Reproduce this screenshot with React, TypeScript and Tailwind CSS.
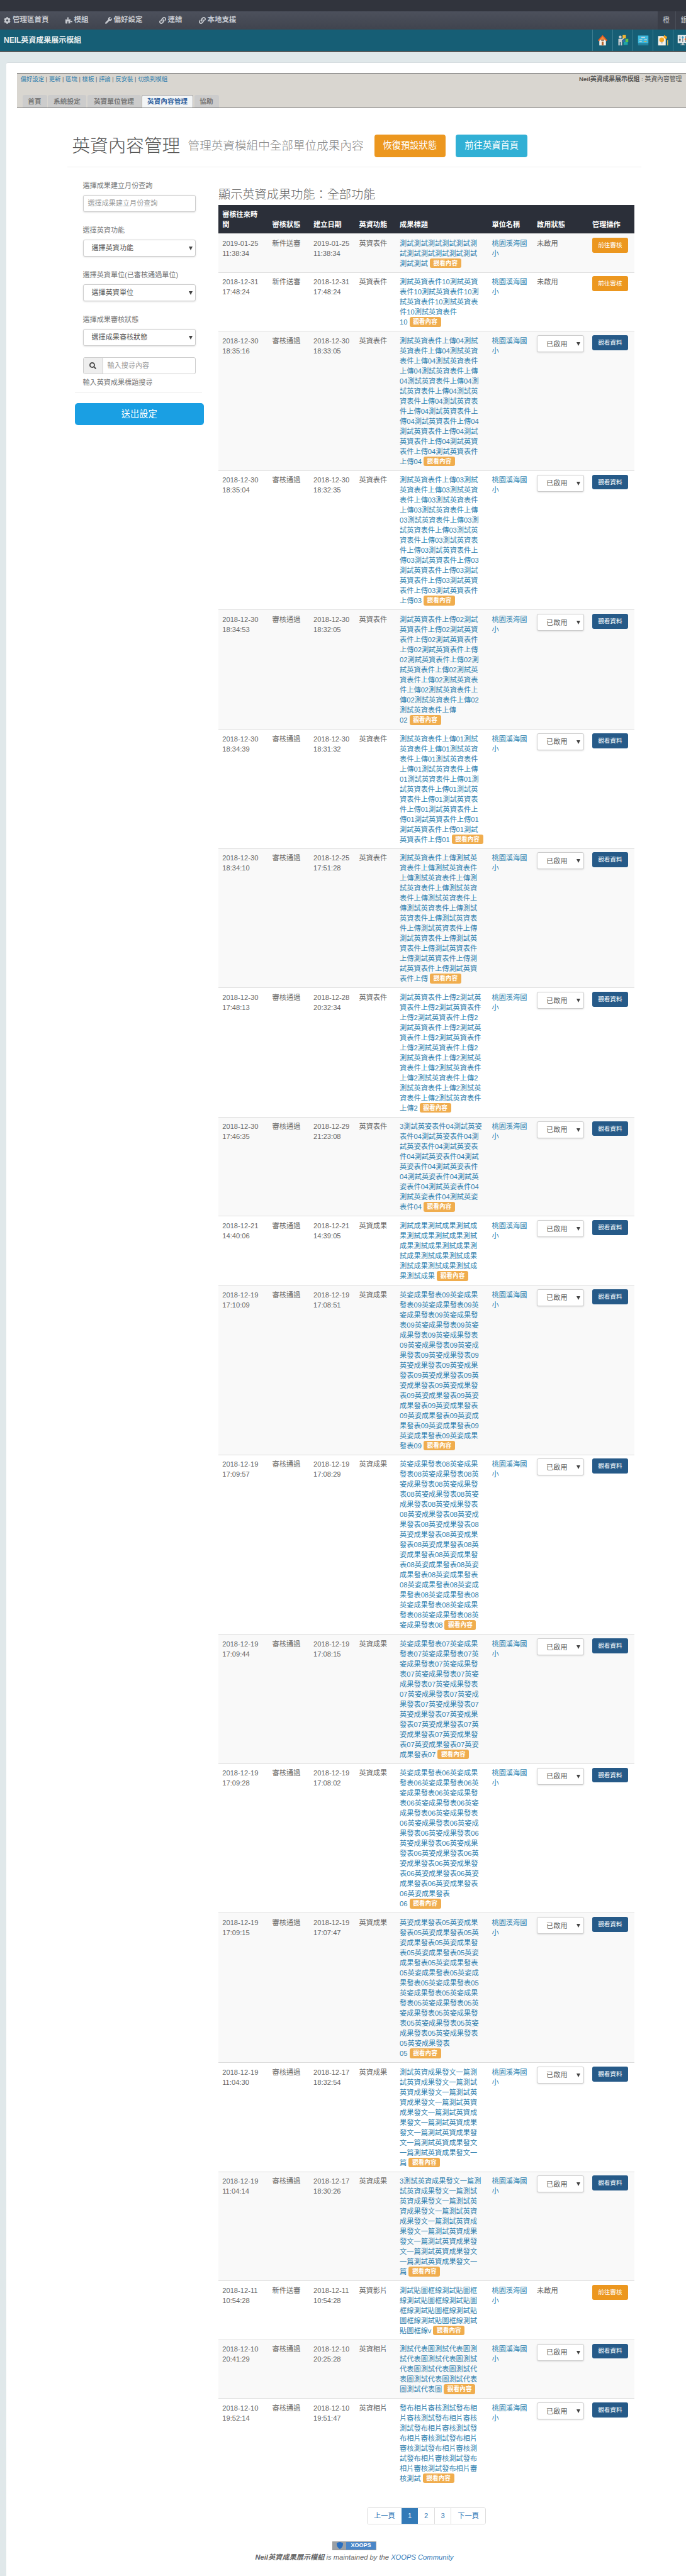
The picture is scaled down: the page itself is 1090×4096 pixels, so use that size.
import React from 'react';
import { FaCog, FaPuzzlePiece, FaWrench, FaLink, FaSearch } from 'react-icons/fa';

const FONT = '"Liberation Sans","Noto Sans CJK TC",sans-serif';

interface Row {
  sent: [string, string];
  status: string;
  created: [string, string];
  kind: string;
  title: string;
  active: boolean;
}

const mk = (
  sent: string,
  status: string,
  created: string,
  kind: string,
  title: string,
  active = true
): Row => ({
  sent: sent.split(' ') as [string, string],
  status,
  created: created.split(' ') as [string, string],
  kind,
  title,
  active,
});

const PASS = '審核通過';
const NEW = '新件送審';
const FORM = '英資表件';
const RESULT = '英資成果';

const rows: Row[] = [
  mk('2019-01-25 11:38:34', NEW, '2019-01-25 11:38:34', FORM, '測試'.repeat(13), false),
  mk('2018-12-31 17:48:24', NEW, '2018-12-31 17:48:24', FORM, '測試英資表件10'.repeat(6), false),
  mk('2018-12-30 18:35:16', PASS, '2018-12-30 18:33:05', FORM, '測試英資表件上傳04'.repeat(15)),
  mk('2018-12-30 18:35:04', PASS, '2018-12-30 18:32:35', FORM, '測試英資表件上傳03'.repeat(15)),
  mk('2018-12-30 18:34:53', PASS, '2018-12-30 18:32:05', FORM, '測試英資表件上傳02'.repeat(12)),
  mk('2018-12-30 18:34:39', PASS, '2018-12-30 18:31:32', FORM, '測試英資表件上傳01'.repeat(13)),
  mk('2018-12-30 18:34:10', PASS, '2018-12-25 17:51:28', FORM, '測試英資表件上傳'.repeat(17)),
  mk('2018-12-30 17:48:13', PASS, '2018-12-28 20:32:34', FORM, '測試英資表件上傳2'.repeat(15)),
  mk('2018-12-30 17:46:35', PASS, '2018-12-29 21:23:08', FORM, '3' + '測試英姿表件04'.repeat(13)),
  mk('2018-12-21 14:40:06', PASS, '2018-12-21 14:39:05', RESULT, '測試成果'.repeat(15)),
  mk('2018-12-19 17:10:09', PASS, '2018-12-19 17:08:51', RESULT, '英姿成果發表09'.repeat(24)),
  mk('2018-12-19 17:09:57', PASS, '2018-12-19 17:08:29', RESULT, '英姿成果發表08'.repeat(26)),
  mk('2018-12-19 17:09:44', PASS, '2018-12-19 17:08:15', RESULT, '英姿成果發表07'.repeat(18)),
  mk('2018-12-19 17:09:28', PASS, '2018-12-19 17:08:02', RESULT, '英姿成果發表06'.repeat(20)),
  mk('2018-12-19 17:09:15', PASS, '2018-12-19 17:07:47', RESULT, '英姿成果發表05'.repeat(20)),
  mk('2018-12-19 11:04:30', PASS, '2018-12-17 18:32:54', RESULT, '測試英資成果發文一篇'.repeat(10)),
  mk('2018-12-19 11:04:14', PASS, '2018-12-17 18:30:26', RESULT, '3' + '測試英資成果發文一篇'.repeat(10)),
  mk('2018-12-11 10:54:28', NEW, '2018-12-11 10:54:28', '英資影片', '測試貼圖框線'.repeat(8) + 'v', false),
  mk('2018-12-10 20:41:29', PASS, '2018-12-10 20:25:28', '英資相片', '測試代表圖'.repeat(10)),
  mk('2018-12-10 19:52:14', PASS, '2018-12-10 19:51:47', '英資相片', '發布相片審核測試'.repeat(10)),
];

// break the titles the way the reference does: width in CJK-char units,
// the last token stays on one line with the badge
const LINE_UNITS = 11.7;
const BADGE_UNITS = 4.5;

const tokenWidth = (t: string) => (/^[0-9a-z]+$/.test(t) ? t.length * 0.556 : 1);

const wrapTitle = (title: string): string[] => {
  const tokens = title.match(/[0-9a-z]+|./g) ?? [];
  const lines: string[] = [];
  let line = '';
  let used = 0;
  tokens.forEach((t, i) => {
    const w = tokenWidth(t);
    const extra = i === tokens.length - 1 ? BADGE_UNITS : 0;
    if (used + w + extra > LINE_UNITS) {
      lines.push(line);
      line = '';
      used = 0;
    }
    line += t;
    used += w;
  });
  lines.push(line);
  return lines;
};

const headers = [
  { label: '審核往來時間', width: 'w-[79.4px]' },
  { label: '審核狀態', width: 'w-[65.4px]' },
  { label: '建立日期', width: 'w-[72.4px]' },
  { label: '英資功能', width: 'w-[64.6px]' },
  { label: '成果標題', width: 'w-[146.3px]' },
  { label: '單位名稱', width: 'w-[71.6px]' },
  { label: '啟用狀態', width: 'w-[87.9px]' },
  { label: '管理操作', width: 'w-[73.1px]' },
];

const Arrow = () => (
  <svg width="6" height="7" viewBox="0 0 6 7" className="shrink-0">
    <path d="M0 1h6L3 7z" fill="#444" />
  </svg>
);

const HomeIcon = () => (
  <svg width="17" height="18" viewBox="0 0 22 24">
    <path d="M4 11h14v12H4z" fill="#f4f1ea" />
    <path d="M9 15h4v8H9z" fill="#b5622a" />
    <path d="M11 1L1 12l2 2 8-8 8 8 2-2z" fill="#e8591c" />
    <path d="M11 4l-6 7h12z" fill="#f08a3c" />
    <path d="M8 11h6v2H8z" fill="#7a5a48" />
  </svg>
);

const PuzzleIcon = () => (
  <svg width="18" height="18" viewBox="0 0 24 24">
    <circle cx="6" cy="5" r="3" fill="#c9cdd0" />
    <path d="M2 9h8l4-3 1 2-5 4v11H7v-7H5v7H2z" fill="#c9cdd0" />
    <path d="M11 1h7v7h-7z" fill="#f2b632" />
    <path d="M12 10h5v6h-5z" fill="#2a6fb0" />
    <path d="M17 9h6v7h-6z" fill="#5cc24a" />
    <path d="M13 16h9v6h-9z" fill="#1fa3a8" />
  </svg>
);

const BoardIcon = () => (
  <svg width="18" height="18" viewBox="0 0 24 24">
    <path d="M1 2h22v17H1z" fill="#3db8dc" />
    <path d="M8 5h8v2H8zM4 10h6v2H4zM14 10h6v2h-6zM4 14h5v2H4z" fill="#c7d6dd" />
    <path d="M14 14h5v2h-5z" fill="#e7b04a" />
    <path d="M1 21h22v1.500H1z" fill="#3db8dc" />
  </svg>
);

const BulbIcon = () => (
  <svg width="18" height="18" viewBox="0 0 24 24">
    <path d="M1 3h12l4 4v16H1z" fill="#f3f1ea" />
    <circle cx="8.500" cy="11" r="5" fill="#f5a623" />
    <path d="M6.500 16h4v3h-4z" fill="#b9c0c4" />
    <path d="M14 1l5 3 1 3-3 3-5-5z" fill="#f2a31d" />
    <path d="M20 12h2v11h-2z" fill="#d9b24a" />
  </svg>
);

const SliderIcon = () => (
  <svg width="18" height="18" viewBox="0 0 24 24">
    <path d="M1 1h22v17H1z" fill="#e9ecec" />
    <path d="M5 3h1.500v13H5zM11 3h1.500v13H11zM17 3h1.500v13H17z" fill="#6d7a80" />
    <circle cx="5.700" cy="11" r="2" fill="#545e63" />
    <circle cx="11.700" cy="6" r="2" fill="#2f9fd0" />
    <circle cx="17.700" cy="10" r="2" fill="#e8662c" />
    <path d="M10 18h4v3h3v1.500H7V21h3z" fill="#c7cccc" />
  </svg>
);

const NavItem = ({ icon, label }: { icon: React.ReactNode; label: string }) => (
  <div className="flex items-center gap-[3px] text-[11.5px] font-bold text-[#c9ccd2]">
    <span className="text-[11px] text-[#c9ccd2]">{icon}</span>
    {label}
  </div>
);

const Field: React.FC<{ label: string; children: React.ReactNode }> = ({ label, children }) => (
  <div className="mb-[21px]">
    <div className="mb-[7px] text-[11.100px] leading-[16px] text-[#777]">{label}</div>
    {children}
  </div>
);

const SelectBox = ({ text }: { text: string }) => (
  <div className="flex h-[27px] w-[179.500px] items-center justify-between rounded-[3px] border border-[#ccc] bg-white pl-[13px] pr-[4px] text-[11.100px] text-[#555] shadow-sm">
    {text}
    <Arrow />
  </div>
);

const StateSelect = () => (
  <div className="flex h-[27px] w-[74.700px] items-center justify-between rounded-[3px] border border-[#ccc] bg-white pl-[14px] pr-[5px] text-[#666] shadow-sm">
    已啟用
    <Arrow />
  </div>
);

const TableRow = ({ row, odd }: { row: Row; odd: boolean }) => {
  const cell = 'border-t border-[#ddd] pb-[6px] pl-[6.200px] pr-[6.200px] pt-[6.600px] align-top';
  const lines = wrapTitle(row.title);
  return (
    <tr className={odd ? 'bg-[#f9f9f9]' : 'bg-white'}>
      <td className={cell}>
        {row.sent[0]}
        <br />
        {row.sent[1]}
      </td>
      <td className={cell}>{row.status}</td>
      <td className={cell}>
        {row.created[0]}
        <br />
        {row.created[1]}
      </td>
      <td className={cell}>{row.kind}</td>
      <td className="overflow-hidden border-t border-[#ddd] pb-[6px] pl-[6.200px] pr-[6.200px] pt-[6.600px] align-top text-[#2f7fae]">
        {lines.map((line, i) => (
          <div key={i} className="h-[16px] whitespace-nowrap">
            {line}
            {i === lines.length - 1 && (
              <span className="ml-[3px] inline-block h-[15.500px] w-[50px] rounded-[3px] bg-[#f0ad4e] text-center align-top text-[9.700px] font-bold leading-[15.500px] text-white">
                觀看內容
              </span>
            )}
          </div>
        ))}
      </td>
      <td className={`${cell} text-[#2f7fae]`}>桃園溪海國小</td>
      <td className={`${cell} !pt-[5.800px]`}>{row.active ? <StateSelect /> : <span className="inline-block pt-[0.800px]">未啟用</span>}</td>
      <td className={`${cell} !pl-[6.200px] !pr-0 !pt-[5.800px]`}>
        {row.active ? (
          <div className="flex h-[23.800px] w-[56.600px] items-center justify-center rounded-[3px] bg-[#265a88] text-[9.600px] text-white">
            觀看資料
          </div>
        ) : (
          <div className="flex h-[23.800px] w-[56.600px] items-center justify-center rounded-[3px] bg-[#ec971f] text-[9.600px] text-white">
            前往審核
          </div>
        )}
      </td>
    </tr>
  );
};

export default function App() {
  return (
    <div
      className="h-[4096px] w-[1090px] overflow-hidden bg-[#e0e8ea]"
      style={{ fontFamily: FONT }}
    >
      <div className="h-[17.600px] bg-[#31343d]" />
      <div className="flex h-[29px] items-center bg-gradient-to-b from-[#4c505c] to-[#40444e] pl-[6px]">
        <div className="flex items-center gap-[26px]">
          <NavItem icon={<FaCog />} label="管理區首頁" />
          <NavItem icon={<FaPuzzlePiece />} label="模組" />
          <NavItem icon={<FaWrench />} label="偏好設定" />
          <NavItem icon={<FaLink />} label="連結" />
          <NavItem icon={<FaLink />} label="本地支援" />
        </div>
        <div className="ml-auto flex h-full text-[11px] text-[#c9ccd2]">
          <div className="flex w-[29px] items-center justify-center border-r border-[#4a4e58] bg-[#3b3e48]">橙</div>
          <div className="flex w-[16.500px] items-center overflow-hidden bg-[#3b3e48] pl-[8px]">
            <span className="shrink-0">銀</span>
          </div>
        </div>
      </div>
      <div className="flex h-[35px] items-center border-b border-black bg-[#165e75] pl-[6px]">
        <div className="text-[12px] font-bold text-[#e8eef0]">NEIL英資成果展示模組</div>
        <div className="ml-auto flex h-full w-[148.600px] overflow-hidden">
          {[<HomeIcon />, <PuzzleIcon />, <BoardIcon />, <BulbIcon />, <SliderIcon />].map((icon, i) => (
            <div key={i} className="flex h-full w-[31.900px] shrink-0 items-center justify-center border-l border-[#3a7c90]">
              {icon}
            </div>
          ))}
        </div>
      </div>

      <div className="ml-[10px] mt-[17px] h-[3997px] rounded-tl-[3px] border-t border-[#d6dde0] bg-white pt-[16px]">
        {/* module admin bar */}
        <div className="relative ml-[16.500px] flex h-[56px] border-y border-[#777] bg-[#d9d6d0]">
          <div className="flex-1 pl-[6px] pt-[2px] text-[9.400px] leading-[14px] text-[#aaa]">
            {['偏好設定', '更新', '區塊', '樣板', '評論', '反安裝', '切換到模組'].map((t, i) => (
              <span key={t}>
                {i > 0 && <span className="text-[#666]"> | </span>}
                <span className="text-[#2f7fae]">{t}</span>
              </span>
            ))}
          </div>
          <div className="w-[170px] overflow-hidden whitespace-nowrap pt-[2px] text-[9.800px] leading-[14px] text-[#555]">
            <b>Neil英資成果展示模組</b> : 英資內容管理
          </div>
          <div className="absolute bottom-0 left-[9px] flex gap-[1.500px] text-[10.700px] font-bold text-[#777]">
            <div className="flex h-[19.500px] w-[39px] items-center justify-center rounded-t-[3px] bg-[#ccc]">首頁</div>
            <div className="flex h-[19.500px] w-[61px] items-center justify-center rounded-t-[3px] bg-[#ccc]">系統設定</div>
            <div className="flex h-[19.500px] w-[85px] items-center justify-center rounded-t-[3px] bg-[#ccc]">英資單位管理</div>
            <div className="flex h-[19.500px] w-[82px] items-center justify-center rounded-t-[3px] border-x border-t border-[#aaa] bg-[#f3f5f6] text-[#2e5f9e]">
              英資內容管理
            </div>
            <div className="flex h-[19.500px] w-[39px] items-center justify-center rounded-t-[3px] bg-[#ccc]">協助</div>
          </div>
        </div>

        <div className="ml-[97px] w-[912px]">
          {/* page header */}
          <div className="mt-[42px] flex h-[52.500px] items-start border-b border-[#eee] pl-[7.500px]">
            <div className="flex h-[37px] items-center">
              <span className="text-[28.600px] font-light text-[#555]">英資內容管理</span>
              <span className="ml-[12.500px] text-[18.600px] font-light text-[#888]">管理英資模組中全部單位成果內容</span>
              <div className="ml-[17px] flex h-[36.600px] w-[113.600px] items-center justify-center rounded-[4px] bg-[#ec971f] text-[14.300px] text-white">
                恢復預設狀態
              </div>
              <div className="ml-[16.300px] flex h-[36.600px] w-[113.600px] items-center justify-center rounded-[4px] bg-[#31b0d5] text-[14.300px] text-white">
                前往英資首頁
              </div>
            </div>
          </div>

          <div className="flex">
            {/* filter form */}
            <div className="w-[240px] shrink-0 pl-[12px] pt-[21px]">
              <div className="pl-[12.500px]">
                <Field label="選擇成果建立月份查詢">
                  <div className="flex h-[27px] w-[179.500px] items-center rounded-[3px] border border-[#ccc] bg-white pl-[7px] text-[11.100px] text-[#999] shadow-sm">
                    選擇成果建立月份查詢
                  </div>
                </Field>
                <Field label="選擇英資功能">
                  <SelectBox text="選擇英資功能" />
                </Field>
                <Field label="選擇英資單位(已審核通過單位)">
                  <SelectBox text="選擇英資單位" />
                </Field>
                <div className="-mb-[3px]">
                  <Field label="選擇成果審核狀態">
                    <SelectBox text="選擇成果審核狀態" />
                  </Field>
                </div>
                <div className="flex h-[27px] w-[179.500px] rounded-[3px] border border-[#ccc] bg-white text-[11.100px] text-[#999]">
                  <div className="flex w-[31px] items-center justify-center border-r border-[#ccc] bg-[#eee] text-[11px] text-[#444]">
                    <FaSearch />
                  </div>
                  <div className="flex items-center pl-[7px]">輸入搜尋內容</div>
                </div>
                <div className="mt-[5px] text-[11.100px] leading-[16px] text-[#777]">輸入英資成果標題搜尋</div>
              </div>
              <div className="mt-[8px] w-[202px] border-t border-[#eee]" />
              <div className="mt-[16px] flex h-[35px] w-[204.600px] items-center justify-center rounded-[5px] bg-[#1a9fe3] text-[14.300px] text-white">
                送出設定
              </div>
            </div>

            {/* results */}
            <div className="w-[661px] shrink-0 pt-[30px]">
              <h3 className="mb-[3px] text-[19.200px] font-light leading-[27px] text-[#666]">顯示英資成果功能：全部功能</h3>
              <table className="w-[661px] table-fixed border-collapse text-[11.200px] leading-[16px] text-[#666]">
                <thead>
                  <tr className="bg-[#2b2f39] text-white">
                    {headers.map(h => (
                      <th
                        key={h.label}
                        className={`${h.width} px-[6.200px] pb-[6.500px] pt-[6.500px] text-left align-bottom font-bold`}
                      >
                        {h.label}
                      </th>
                    ))}
                  </tr>
                </thead>
                <tbody>
                  {rows.map((row, i) => (
                    <TableRow key={i} row={row} odd={i % 2 === 0} />
                  ))}
                </tbody>
              </table>

              <div className="mt-[32px] flex justify-center">
                <div className="flex h-[27px] overflow-hidden rounded-[3px] border border-[#ddd] text-[11.200px] text-[#337ab7]">
                  <div className="flex w-[53.500px] items-center justify-center bg-white">上一頁</div>
                  <div className="flex w-[26.700px] items-center justify-center bg-[#337ab7] text-white">1</div>
                  <div className="flex w-[26.700px] items-center justify-center border-r border-[#ddd] bg-white">2</div>
                  <div className="flex w-[26.300px] items-center justify-center border-r border-[#ddd] bg-white">3</div>
                  <div className="flex w-[53.500px] items-center justify-center bg-white">下一頁</div>
                </div>
              </div>
            </div>
          </div>

          {/* footer */}
          <div className="mt-[27px] flex flex-col items-center">
            <div className="flex h-[14px] w-[70px] overflow-hidden border border-[#999] bg-[#4a86c8]">
              <div className="flex w-[21px] items-center justify-center bg-[#9aa0a6]">
                <svg width="10" height="11" viewBox="0 0 10 11">
                  <path d="M5 0c2 0 4 1 5 2 0 4-1 7-5 9C1 9 0 6 0 2c1-1 3-2 5-2z" fill="#2a6fc0" />
                </svg>
              </div>
              <div className="flex flex-1 items-center justify-center text-[9px] font-bold leading-none text-white">XOOPS</div>
            </div>
            <div className="mt-[3px] text-[11.200px] italic leading-[16px] text-[#666]">
              <b>Neil英資成果展示模組</b> is maintained by the <span className="text-[#337ab7]">XOOPS Community</span>
            </div>
          </div>
        </div>
      </div>
    </div>
  );
}
